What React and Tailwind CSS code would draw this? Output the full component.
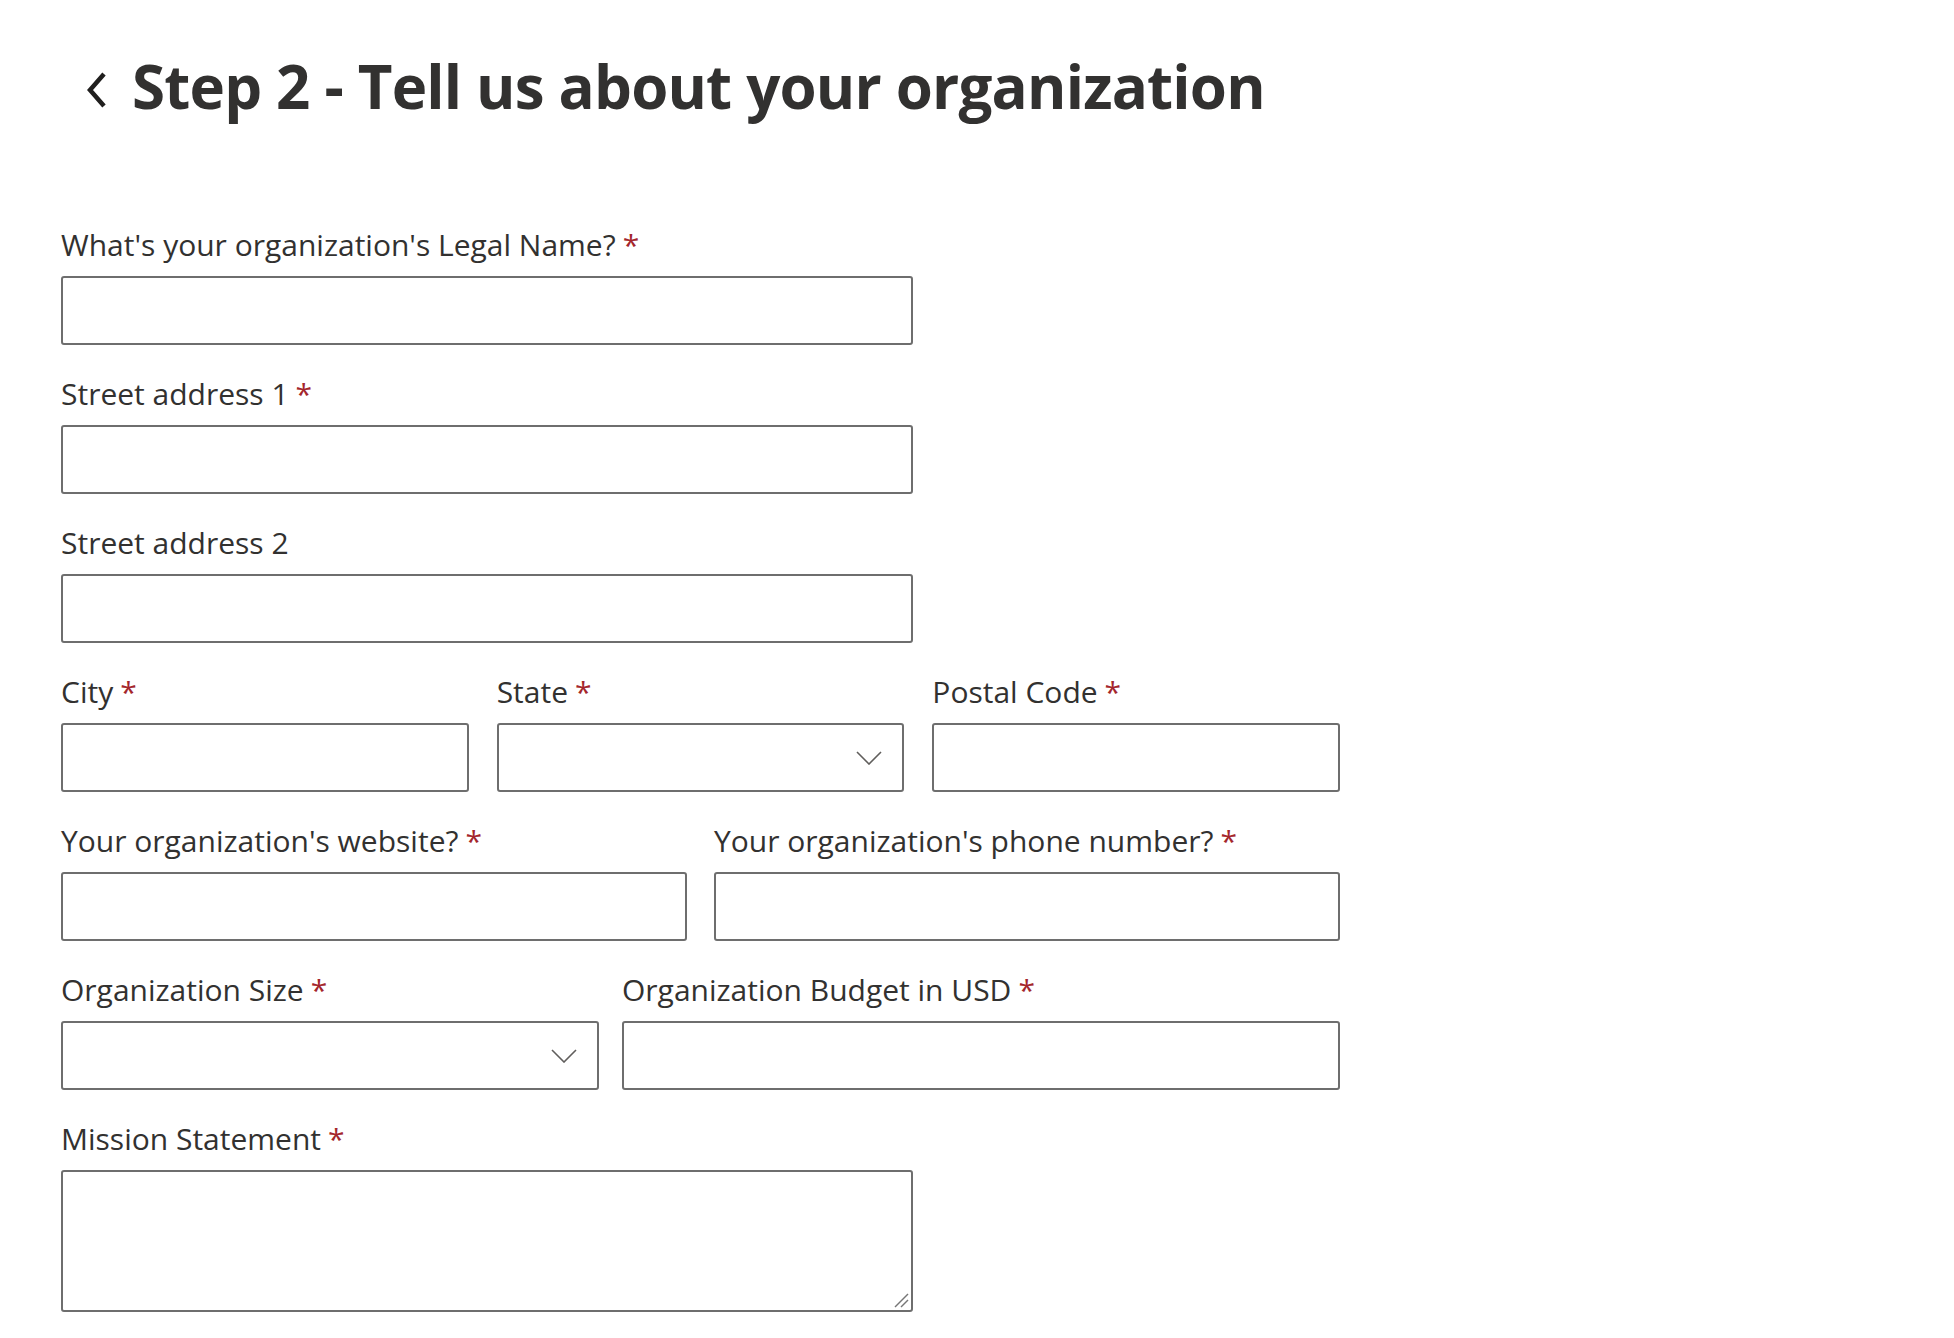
import React from "react";

function Label({ text, required }) {
  return (
    <label className="block text-[30px] leading-[38px] mb-[12px] font-[500] text-[#323130]">
      {text}
      {required && <span className="ml-[7px] text-[#a4262c]">*</span>}
    </label>
  );
}

function TextInput() {
  return (
    <input
      type="text"
      className="block w-full h-[69px] px-3 border-2 border-[#6e6e6e] rounded-[3px] bg-white outline-none"
    />
  );
}

function SelectBox() {
  return (
    <div className="relative h-[69px] w-full border-2 border-[#6e6e6e] rounded-[3px] bg-white">
      <svg
        className="absolute right-[20px] top-[26px]"
        width="26"
        height="14"
        viewBox="0 0 26 14"
        fill="none"
      >
        <polyline points="1,1 13,13 25,1" stroke="#605e5c" strokeWidth="1.6" />
      </svg>
    </div>
  );
}

function Field({ label, required, children, className = "" }) {
  return (
    <div className={className}>
      <Label text={label} required={required} />
      {children}
    </div>
  );
}

export default function App() {
  return (
    <div className="min-h-screen bg-white text-[#323130] font-['Open_Sans','Noto_Sans',sans-serif]">
      <div className="pl-[61px] pt-[48px] pb-[26px]">
        <div className="flex items-center">
          <svg
            className="ml-[26px] mr-[25px] mt-[8px]"
            width="20"
            height="36"
            viewBox="0 0 20 36"
            fill="none"
          >
            <polyline
              points="17,2 3,18 17,34"
              stroke="#201f1e"
              strokeWidth="4.5"
              strokeLinejoin="miter"
            />
          </svg>
          <h1 className="text-[60px] leading-[76px] font-bold tracking-[-0.8px]">
            Step 2 - Tell us about your organization
          </h1>
        </div>

        <form className="mt-[102px] w-[1279px] flex flex-col gap-[30px]">
          <Field className="w-[852px]" label="What's your organization's Legal Name?" required>
            <TextInput />
          </Field>
          <Field className="w-[852px]" label="Street address 1" required>
            <TextInput />
          </Field>
          <Field className="w-[852px]" label="Street address 2">
            <TextInput />
          </Field>
          <div className="grid grid-cols-3 gap-[28px]">
            <Field label="City" required>
              <TextInput />
            </Field>
            <Field label="State" required>
              <SelectBox />
            </Field>
            <Field label="Postal Code" required>
              <TextInput />
            </Field>
          </div>
          <div className="grid grid-cols-2 gap-[27px]">
            <Field label="Your organization's website?" required>
              <TextInput />
            </Field>
            <Field label="Your organization's phone number?" required>
              <TextInput />
            </Field>
          </div>
          <div className="grid grid-cols-[538px_1fr] gap-[23px]">
            <Field label="Organization Size" required>
              <SelectBox />
            </Field>
            <Field label="Organization Budget in USD" required>
              <TextInput />
            </Field>
          </div>
          <Field className="w-[852px]" label="Mission Statement" required>
            <div className="relative">
              <textarea className="block w-full h-[142px] p-3 border-2 border-[#6e6e6e] rounded-[3px] bg-white outline-none resize-none" />
              {/* resize grip */}
              <svg
                className="absolute right-[4px] bottom-[4px] pointer-events-none"
                width="16"
                height="16"
                viewBox="0 0 16 16"
                fill="none"
              >
                <line x1="15" y1="2" x2="2" y2="15" stroke="#767676" strokeWidth="1.5" />
                <line x1="15" y1="8" x2="8" y2="15" stroke="#767676" strokeWidth="1.5" />
              </svg>
            </div>
          </Field>
        </form>
      </div>
    </div>
  );
}
